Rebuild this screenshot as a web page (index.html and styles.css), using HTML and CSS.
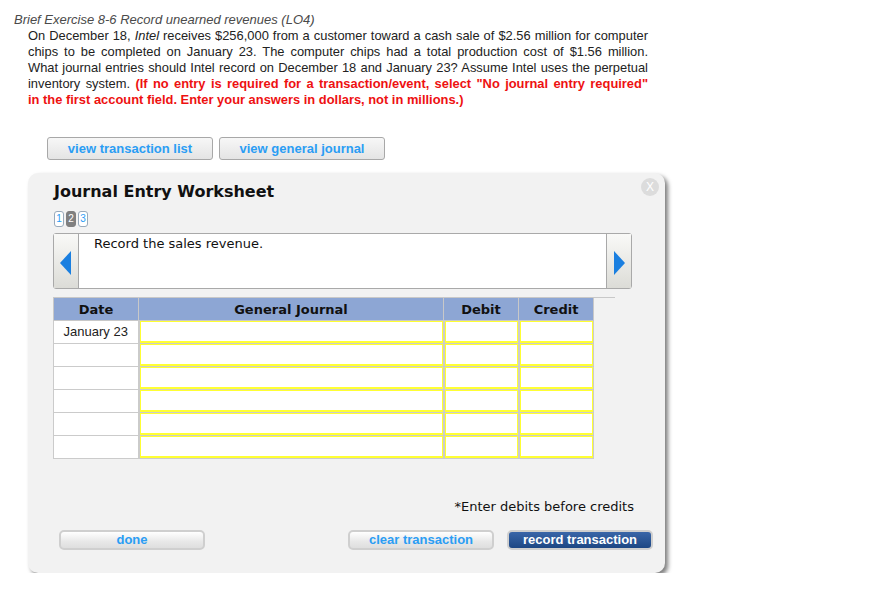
FILE: index.html
```html
<!DOCTYPE html>
<html>
<head>
<meta charset="utf-8">
<link rel="stylesheet" href="styles.css">
</head>
<body>
<div class="question">
  <div class="q-title">Brief Exercise 8-6 Record unearned revenues (LO4)</div>
  <p class="q-body">On December 18, <i>Intel</i> receives $256,000 from a customer toward a cash sale of $2.56 million for computer<br>chips to be completed on January 23. The computer chips had a total production cost of $1.56 million.<br>What journal entries should Intel record on December 18 and January 23? Assume Intel uses the perpetual<br>inventory system. <b class="red">(If no entry is required for a transaction/event, select "No journal entry required"</b></p>
  <p class="q-last"><b class="red">in the first account field. Enter your answers in dollars, not in millions.)</b></p>
</div>

<div class="top-buttons">
  <button class="btn btn-light wide">view transaction list</button>
  <button class="btn btn-light wide">view general journal</button>
</div>

<div class="panel">
  <span class="close">X</span>
  <h2 class="panel-title">Journal Entry Worksheet</h2>
  <div class="tabs">
    <span class="tab">1</span><span class="tab active">2</span><span class="tab">3</span>
  </div>
  <div class="desc">
    <div class="arrow-btn"><svg width="12" height="24" viewBox="0 0 12 24"><path d="M11 0 L0 12 L11 24 Z" fill="#1a7fe0"/></svg></div>
    <div class="desc-text">Record the sales revenue.</div>
    <div class="arrow-btn"><svg width="12" height="24" viewBox="0 0 12 24"><path d="M1 0 L12 12 L1 24 Z" fill="#1a7fe0"/></svg></div>
  </div>
  <div class="table-wrap">
    <table class="journal">
      <thead>
        <tr><th class="c-date">Date</th><th class="c-gj">General Journal</th><th class="c-amt">Debit</th><th class="c-amt">Credit</th></tr>
      </thead>
      <tbody>
        <tr><td class="date">January 23</td><td class="inp"></td><td class="inp"></td><td class="inp"></td></tr>
        <tr><td class="date"></td><td class="inp"></td><td class="inp"></td><td class="inp"></td></tr>
        <tr><td class="date"></td><td class="inp"></td><td class="inp"></td><td class="inp"></td></tr>
        <tr><td class="date"></td><td class="inp"></td><td class="inp"></td><td class="inp"></td></tr>
        <tr><td class="date"></td><td class="inp"></td><td class="inp"></td><td class="inp"></td></tr>
        <tr><td class="date"></td><td class="inp"></td><td class="inp"></td><td class="inp"></td></tr>
      </tbody>
    </table>
    <div class="table-line"></div>
  </div>
  <div class="note">*Enter debits before credits</div>
  <div class="bottom-buttons">
    <button class="btn btn-round">done</button>
    <div class="right-btns">
      <button class="btn btn-round">clear transaction</button>
      <button class="btn btn-dark">record transaction</button>
    </div>
  </div>
</div>
</body>
</html>
```

FILE: styles.css
```css
html, body {
  margin: 0;
  padding: 0;
  background: #ffffff;
}
body {
  width: 877px;
  font-family: "Liberation Sans", Arial, sans-serif;
}
.question {
  padding: 12px 0 0 14px;
}
.q-title {
  font-style: italic;
  font-size: 13px;
  color: #4a4a4a;
  line-height: 16px;
}
.q-body,
.q-last {
  margin: 0 0 0 14px;
  width: 620px;
  font-size: 12.9px;
  line-height: 16px;
  color: #222;
}
.q-body {
  text-align: justify;
  text-align-last: justify;
}
.red {
  color: #ee1111;
}
.top-buttons {
  display: flex;
  gap: 6px;
  margin: 29px 0 0 47px;
}
.btn {
  font-family: "Liberation Sans", Arial, sans-serif;
  font-weight: bold;
  font-size: 13px;
  cursor: pointer;
  padding: 0;
}
.btn-light {
  height: 23px;
  border: 1px solid #a8a8a8;
  border-radius: 3px;
  background: linear-gradient(#f7f7f7, #e4e4e4);
  color: #2a9df4;
}
.wide {
  width: 166px;
}
.panel {
  position: relative;
  margin: 13px 0 0 28px;
  width: 637px;
  height: 400px;
  box-sizing: border-box;
  background: #f2f2f2;
  border-radius: 10px;
  box-shadow: 3px 3px 4px rgba(0, 0, 0, 0.5);
  padding: 9px 0 0 25px;
  font-family: "DejaVu Sans", Verdana, sans-serif;
}
.close {
  position: absolute;
  top: 5px;
  right: 6px;
  width: 18px;
  height: 18px;
  border-radius: 50%;
  background: #dcdcdc;
  color: #ffffff;
  font-family: "Liberation Sans", Arial, sans-serif;
  font-size: 12px;
  line-height: 18px;
  text-align: center;
}
.panel-title {
  margin: 0 0 0 1px;
  font-size: 16px;
  font-weight: bold;
  color: #111;
  line-height: 20px;
}
.tabs {
  display: flex;
  gap: 2px;
  margin: 9px 0 0 1px;
}
.tab {
  width: 10px;
  height: 16px;
  box-sizing: border-box;
  border: 1px solid #9ab;
  border-radius: 3px;
  background: #fff;
  color: #2a9df4;
  font-family: "Liberation Sans", Arial, sans-serif;
  font-size: 10px;
  line-height: 14px;
  text-align: center;
}
.tab.active {
  background: #808080;
  border-color: #808080;
  color: #fff;
}
.desc {
  display: flex;
  margin-top: 6px;
  width: 579px;
  height: 56px;
  box-sizing: border-box;
  border: 1px solid #a9a9a9;
  border-radius: 3px;
  background: #fff;
}
.arrow-btn {
  width: 25px;
  display: flex;
  align-items: center;
  justify-content: center;
  background: linear-gradient(#f9f9f7, #dcdcd7);
  padding-top: 4px;
  box-sizing: border-box;
}
.arrow-btn:first-child {
  border-right: 1px solid #a9a9a9;
}
.arrow-btn:last-child {
  border-left: 1px solid #a9a9a9;
}
.desc-text {
  flex: 1;
  padding: 2px 0 0 15px;
  font-size: 13px;
  color: #111;
  line-height: 16px;
}
.table-wrap {
  position: relative;
  margin-top: 8px;
}
.table-line {
  position: absolute;
  top: 0;
  left: 540px;
  width: 22px;
  height: 1px;
  background: #c8c8c8;
}
.journal {
  border-collapse: collapse;
  width: 541px;
  table-layout: fixed;
}
.journal th {
  height: 23px;
  box-sizing: border-box;
  background: #8da6d4;
  border: 1px solid #c8c8c8;
  font-size: 13px;
  font-weight: bold;
  color: #111;
  padding: 0;
}
.c-date { width: 85px; }
.c-gj { width: 305px; }
.c-amt { width: 75px; }
.journal td {
  height: 23px;
  box-sizing: border-box;
  padding: 0;
  border: 1px solid #cbcbcb;
  background: #fff;
}
.journal td.inp {
  border-left: 2px solid #cbcbcb;
  box-shadow: inset 1px 1px 0 #ffff33, inset -1px -2px 0 #ffff33;
}
.journal td.date {
  font-family: "Liberation Sans", Arial, sans-serif;
  font-size: 13px;
  color: #222;
  text-align: center;
  vertical-align: top;
  padding-top: 3px;
}
.note {
  margin: 40px 31px 0 0;
  text-align: right;
  font-size: 13px;
  color: #111;
  line-height: 16px;
}
.bottom-buttons {
  display: flex;
  justify-content: space-between;
  margin: 15px 12px 0 6px;
}
.right-btns {
  display: flex;
  gap: 13px;
}
.btn-round {
  width: 146px;
  height: 20px;
  border: 2px solid #cfcfcf;
  border-radius: 5px;
  background: linear-gradient(#ffffff, #e8e8e8 60%, #dedede);
  color: #2a9df4;
  line-height: 16px;
}
.btn-dark {
  width: 146px;
  height: 20px;
  border: 2px solid #cfcfcf;
  border-radius: 5px;
  background: linear-gradient(#3a66a8, #1d4784);
  color: #ffffff;
  line-height: 16px;
}
```
